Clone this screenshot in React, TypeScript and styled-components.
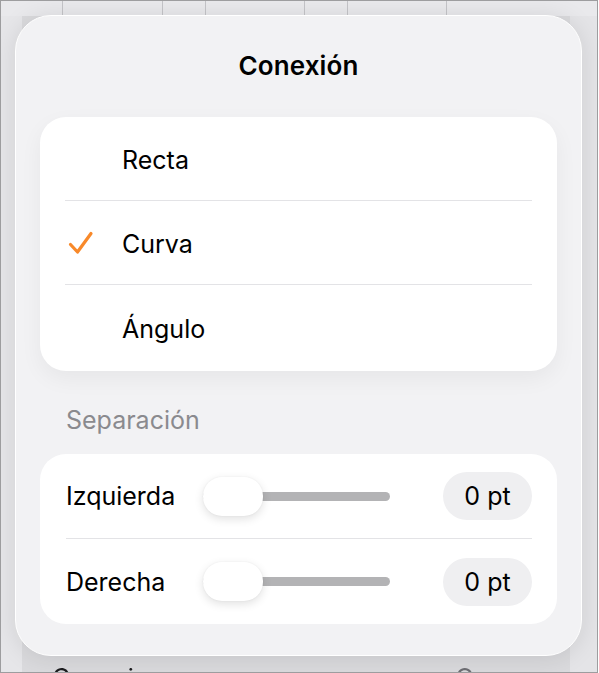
import React from "react";
import styled, { createGlobalStyle } from "styled-components";

const Global = createGlobalStyle`
  html, body { margin: 0; padding: 0; background: #ffffff; }
  body { font-family: Inter, "Noto Sans", "Liberation Sans", sans-serif; -webkit-font-smoothing: antialiased; }
  * { box-sizing: border-box; }
`;

const Frame = styled.div`
  position: relative;
  width: 598px;
  height: 673px;
  border: 1px solid #9d9d9f;
  background: #e3e3e6;
  overflow: hidden;
  display: flex;
  flex-direction: column;
`;

/* ---------- background app (blurred behind the popover) ---------- */
const HeaderStrip = styled.div`
  height: 15px;
  flex: none;
  display: grid;
  grid-template-columns: 62px 100px 43px 99px 43px 99px 1fr;
  background: #e9e9ec;
`;

const HeaderCell = styled.div<{ $line?: boolean }>`
  border-right: ${(p) => (p.$line ? "1px solid #c4c4c8" : "none")};
`;

const AppBody = styled.div`
  flex: 1;
  display: grid;
  grid-template-columns: 21px 1fr 27px;
`;

const Gutter = styled.div<{ $tone: string }>`
  background: ${(p) => p.$tone};
`;

const ListArea = styled.div`
  background: #dadadd;
  display: flex;
  flex-direction: column;
  justify-content: flex-end;
  filter: blur(0.6px);
`;

const ListRow = styled.div`
  height: 18px;
  margin-bottom: -12px;
  display: flex;
  align-items: flex-start;
  padding: 0 26px 0 30px;
  font-size: 25px;
  line-height: 24px;
  color: #1c1c1e;
`;

const ListLabel = styled.span`
  flex: 1;
`;

const ListValue = styled.span`
  color: #6e6e73;
  margin-right: 60px;
`;

const ListChevron = styled.span`
  color: #9a9a9e;
`;

/* ---------- popover ---------- */
const Popover = styled.div`
  position: absolute;
  left: 14px;
  top: 14px;
  width: 567px;
  height: 641px;
  border-radius: 36px;
  background: #f2f2f4;
  border: 1px solid #ffffff;
  box-shadow: 0 2px 24px rgba(0, 0, 0, 0.1);
  padding: 0 24px;
  display: flex;
  flex-direction: column;
`;

const TitleBar = styled.div`
  height: 101px;
  flex: none;
  display: flex;
  align-items: center;
  justify-content: center;
  padding-bottom: 2px;
`;

const Title = styled.h1`
  margin: 0;
  font-size: 26px;
  font-weight: 600;
  color: #000;
  letter-spacing: 0.1px;
`;

const Panel = styled.div<{ $shadow?: boolean }>`
  background: #ffffff;
  border-radius: 26px;
  display: flex;
  flex-direction: column;
  box-shadow: ${(p) => (p.$shadow ? "0 8px 22px rgba(0, 0, 0, 0.05)" : "none")};
`;

const OptionRow = styled.div<{ $h: number; $divider?: boolean }>`
  position: relative;
  height: ${(p) => p.$h}px;
  display: grid;
  grid-template-columns: 82px 1fr;
  align-items: center;
  border-bottom: ${(p) => (p.$divider ? "1px solid #e3e3e6" : "none")};
  margin: 0 25px;
`;

const CheckCell = styled.div`
  display: flex;
  align-items: center;
  padding-left: 3px;
`;

const OptionLabel = styled.span`
  font-size: 25px;
  color: #000;
  margin-left: -25px;
  padding-top: 2px;
`;

const SectionHeader = styled.div`
  height: 83px;
  flex: none;
  display: flex;
  align-items: center;
  padding: 15px 0 0 26px;
  font-size: 25px;
  color: #8a8a8e;
`;

const SliderRow = styled.div<{ $divider?: boolean }>`
  height: 85px;
  margin: 0 25px 0 26px;
  display: grid;
  grid-template-columns: 137px 187px 1fr;
  align-items: center;
  border-bottom: ${(p) => (p.$divider ? "1px solid #e3e3e6" : "none")};
`;

const SliderLabel = styled.span`
  font-size: 25px;
  color: #000;
`;

const Slider = styled.div`
  position: relative;
  height: 39px;
  display: flex;
  align-items: center;
`;

const Track = styled.div`
  width: 100%;
  height: 9px;
  border-radius: 5px;
  background: #b3b3b5;
`;

const Thumb = styled.div`
  position: absolute;
  left: 0;
  top: 0;
  width: 60px;
  height: 39px;
  border-radius: 19px;
  background: #ffffff;
  box-shadow: 0 3px 10px rgba(0, 0, 0, 0.12), 0 0 2px rgba(0, 0, 0, 0.06);
`;

const ValuePill = styled.div`
  justify-self: end;
  width: 89px;
  height: 48px;
  border-radius: 24px;
  background: #efeff1;
  display: flex;
  align-items: center;
  justify-content: center;
  font-size: 25px;
  color: #000;
`;

const Check = () => (
  <svg width="26" height="24" viewBox="0 0 26 24">
    <path
      d="M2.5 13.5 L9.5 21 L23 2.5"
      fill="none"
      stroke="#f8892a"
      strokeWidth="3.2"
      strokeLinecap="round"
      strokeLinejoin="round"
    />
  </svg>
);

const options = [
  { label: "Recta", checked: false, h: 84 },
  { label: "Curva", checked: true, h: 84 },
  { label: "Ángulo", checked: false, h: 86 },
];

const sliders = [
  { label: "Izquierda", value: "0 pt" },
  { label: "Derecha", value: "0 pt" },
];

const headerLines = [true, true, true, true, true, true, false];

export default function App() {
  return (
    <>
      <Global />
      <Frame>
        <HeaderStrip>
          {headerLines.map((l, i) => (
            <HeaderCell key={i} $line={l} />
          ))}
        </HeaderStrip>
        <AppBody>
          <Gutter $tone="#e6e6e9" />
          <ListArea>
            <ListRow>
              <ListLabel>Conexiones</ListLabel>
              <ListValue>O</ListValue>
              <ListChevron>›</ListChevron>
            </ListRow>
          </ListArea>
          <Gutter $tone="#e4e4e7" />
        </AppBody>

        <Popover>
          <TitleBar>
            <Title>Conexión</Title>
          </TitleBar>
          <Panel $shadow>
            {options.map((o, i) => (
              <OptionRow key={o.label} $h={o.h} $divider={i < options.length - 1}>
                <CheckCell>{o.checked ? <Check /> : null}</CheckCell>
                <OptionLabel>{o.label}</OptionLabel>
              </OptionRow>
            ))}
          </Panel>
          <SectionHeader>Separación</SectionHeader>
          <Panel>
            {sliders.map((s, i) => (
              <SliderRow key={s.label} $divider={i < sliders.length - 1}>
                <SliderLabel>{s.label}</SliderLabel>
                <Slider>
                  <Track />
                  <Thumb />
                </Slider>
                <ValuePill>{s.value}</ValuePill>
              </SliderRow>
            ))}
          </Panel>
        </Popover>
      </Frame>
    </>
  );
}
